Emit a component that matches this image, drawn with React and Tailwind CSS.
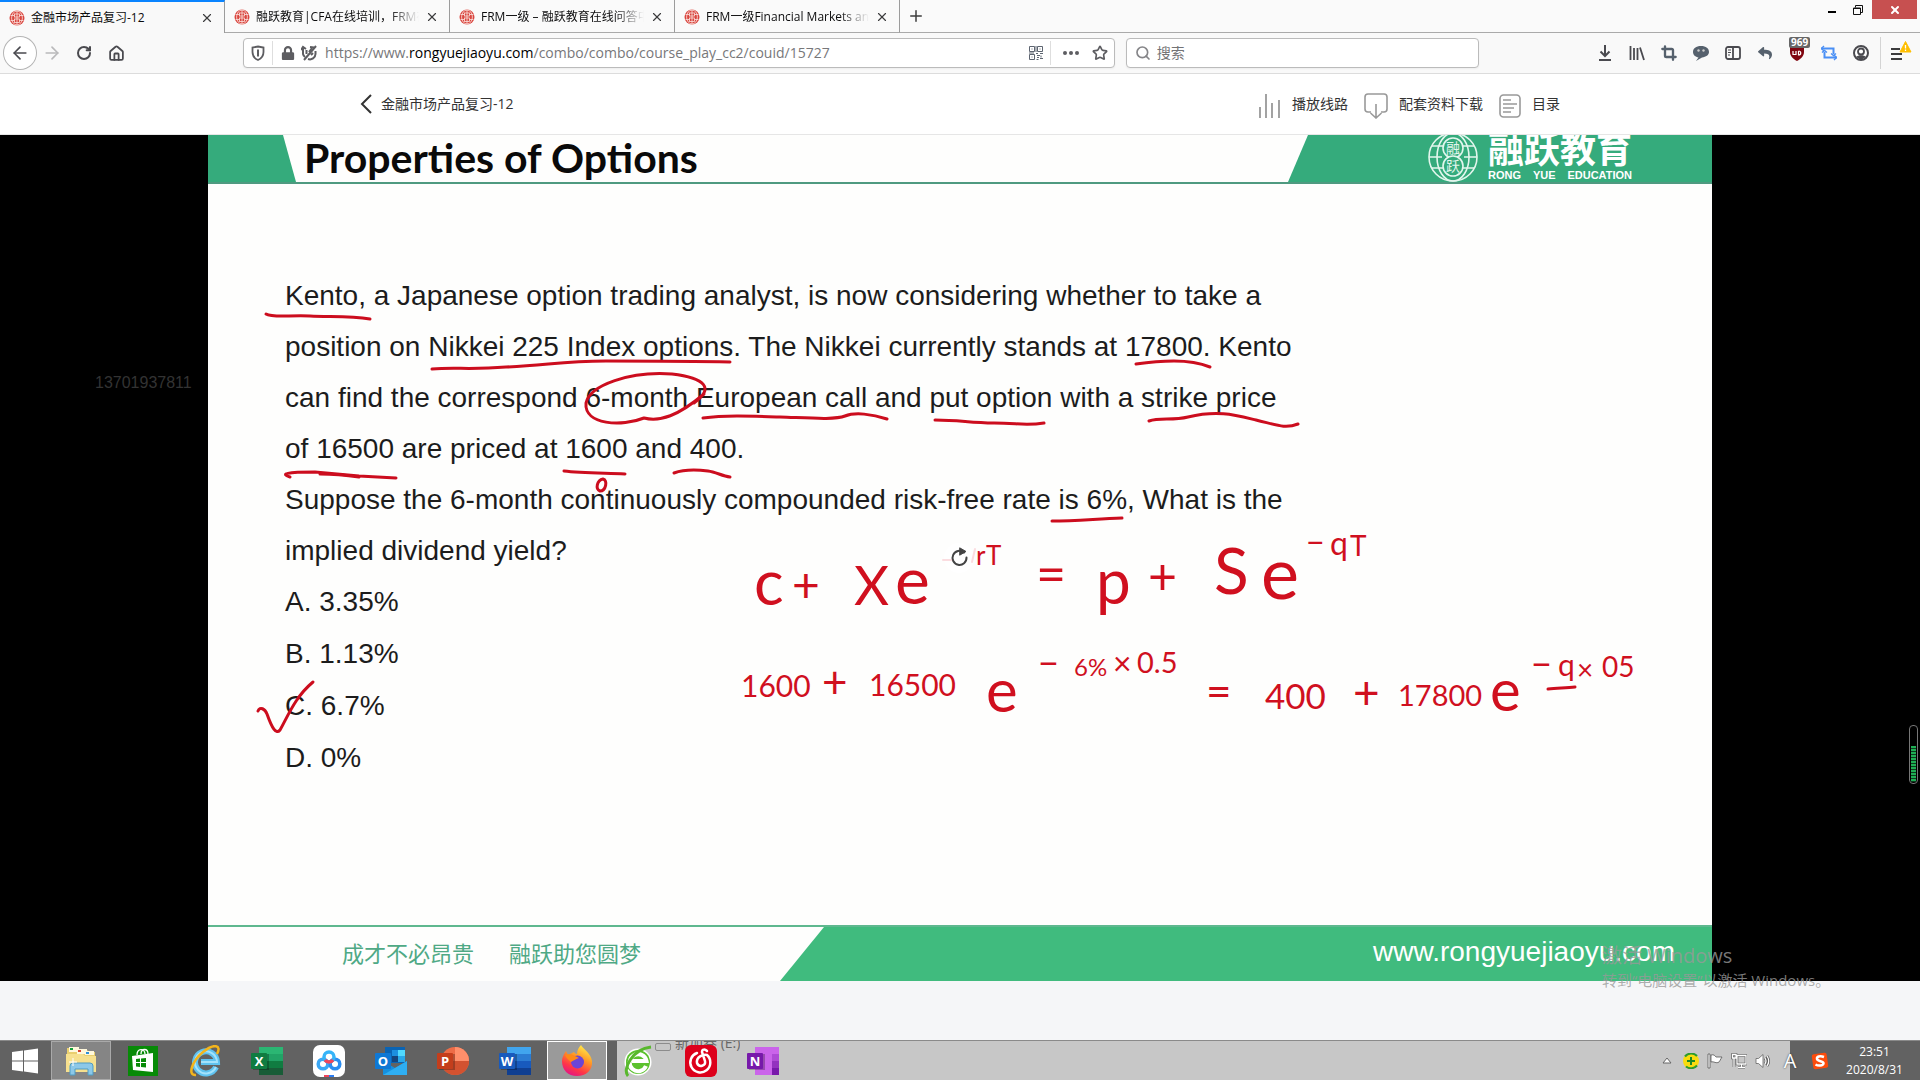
import React from "react";
import {
  ArrowLeft,
  ArrowRight,
  Crop,
  Home,
  Plus,
  RotateCw,
  Search,
  Star,
  X,
} from "lucide-react";
import { FaLock, FaReply } from "react-icons/fa";

const tabs = [
  { title: "金融市场产品复习-12", active: true },
  { title: "融跃教育|CFA在线培训，FRM在线培训" },
  { title: "FRM一级 – 融跃教育在线问答中心" },
  { title: "FRM一级Financial Markets and Products" },
];

const question = [
  "Kento, a Japanese option trading analyst, is now considering whether to take a",
  "position on Nikkei 225 Index options. The Nikkei currently stands at 17800. Kento",
  "can find the correspond 6-month European call and put option with a strike price",
  "of 16500 are priced at 1600 and 400.",
  "Suppose the 6-month continuously compounded risk-free rate is 6%, What is the",
  "implied dividend yield?",
];

const answers = ["A. 3.35%", "B. 1.13%", "C. 6.7%", "D. 0%"];

// Pen strokes: underlines, the ring and the tick
const strokes = [
  "M266 314 C272 318 290 315 310 316 S350 316 370 319",
  "M432 369 C455 367 470 370 506 367 C545 366 560 361 606 361 S690 361 730 362",
  "M694 403 C715 388 705 378 672 374 C630 371 590 385 586 403 C584 425 622 427 644 418 C660 422 678 416 704 394",
  "M703 418 C725 415 750 416 780 417 S835 420 845 416 S872 414 887 419",
  "M935 420 C960 420 970 423 994 423 S1025 426 1044 423",
  "M1149 421 C1160 417 1172 421 1188 417 C1218 410 1235 415 1256 420 S1285 429 1298 424",
  "M1136 364 C1150 362 1160 361 1174 361 S1200 363 1210 367",
  "M290 477 C280 474 286 472 315 472 L359 476 L396 478",
  "M320 474 C335 474 345 475 359 477",
  "M564 471 C580 473 600 473 625 474",
  "M674 473 C685 469 700 470 708 471 S722 476 730 477",
  "M603 479 C597 480 595 489 600 491 C606 491 608 480 603 479 Z",
  "M1052 521 C1075 521 1095 519 1122 518",
  "M258 711 C260 706 265 709 267 714 C272 728 276 735 280 730 C288 716 295 697 313 682",
  "M1548 689 C1558 688 1566 688 1575 687",
];

// Handwritten working: [text, x, baseline, font size]
const working = [
  ["c", 754, 605, 62],
  ["+", 792, 602, 48],
  ["X", 854, 605, 54],
  ["e", 895, 604, 66],
  ["r", 976, 565, 26],
  ["T", 986, 565, 26],
  ["=", 1036, 593, 52],
  ["p", 1096, 604, 62],
  ["+", 1148, 594, 50],
  ["S", 1214, 594, 64],
  ["e", 1261, 599, 72],
  ["−", 1306, 554, 32],
  ["q", 1330, 555, 32],
  ["T", 1350, 556, 28],
  ["1600", 741, 697, 30],
  ["+", 822, 698, 44],
  ["16500", 869, 696, 30],
  ["e", 986, 712, 60],
  ["−", 1038, 676, 36],
  ["6%", 1074, 676, 24],
  ["×", 1113, 675, 32],
  ["0.5", 1137, 673, 29],
  ["=", 1206, 707, 44],
  ["400", 1265, 709, 35],
  ["+", 1353, 709, 46],
  ["17800", 1398, 706, 29],
  ["e", 1490, 711, 58],
  ["−", 1531, 677, 36],
  ["q", 1558, 676, 30],
  ["×", 1577, 680, 28],
  ["05", 1602, 677, 28],
];

function Favicon() {
  return (
    <svg viewBox="0 0 16 16" className="size-4 shrink-0">
      <circle cx="8" cy="8" r="7.5" fill="#d9463f" />
      <g fill="none" stroke="#fbe3df" strokeWidth="0.8">
        <ellipse cx="8" cy="8" rx="5.4" ry="7" />
        <path d="M8 1v14M1.5 5.5h4M10.500 5.500h4M1.500 10.500h4M10.500 10.500h4" />
        <rect x="5.500" y="4" width="5" height="3" />
        <rect x="5.500" y="9" width="5" height="3.500" />
      </g>
    </svg>
  );
}

function TabBar() {
  return (
    <div className="flex h-[33px] bg-[#fafafa]">
      <div role="tablist" className="flex min-w-0 flex-1">
        {tabs.map((tab) => (
          <div
            key={tab.title}
            role="tab"
            aria-selected={!!tab.active}
            className={`flex w-[225px] items-center gap-1.5 border-r border-[#9c9c9c] pl-[9px] pr-2.5 ${
              tab.active
                ? "border-t-2 border-t-[#0a84ff] bg-[#f9f9f9]"
                : "border-b border-b-[#aaaaaa] pt-0.5"
            }`}
          >
            <Favicon />
            <span
              className={`min-w-0 flex-1 overflow-hidden whitespace-nowrap text-xs text-[#0c0c0d] ${
                tab.active ? "" : "[mask-image:linear-gradient(to_right,#000_82%,transparent)]"
              }`}
            >
              {tab.title}
            </span>
            <button aria-label="关闭标签页">
              <X className="size-3.5 text-[#3c3c3d]" />
            </button>
          </div>
        ))}
        <div className="flex flex-1 items-center border-b border-[#aaaaaa] pl-[7px]">
          <button aria-label="打开新标签页">
            <Plus className="size-[18px] text-[#3c3c3d]" />
          </button>
        </div>
      </div>
      <div className="flex items-start border-b border-[#aaaaaa] pr-[3px]">
        <button aria-label="最小化" className="flex h-5 w-6 items-center justify-center">
          <span className="mt-1 h-0.5 w-2 bg-black" />
        </button>
        <button aria-label="还原" className="flex h-5 w-7 items-center justify-center">
          <svg viewBox="0 0 10 10" className="size-2.5" fill="none" stroke="#111">
            <path d="M2.500 2.500V0.500H9.500V7.500H7.500" />
            <path d="M0.500 3H7.500V9.500H0.500Z" />
            <path d="M0.500 3.500H7.500" />
          </svg>
        </button>
        <button
          aria-label="关闭"
          className="flex h-[19px] w-[45px] items-center justify-center bg-[#c75050] text-white"
        >
          <X className="size-3" strokeWidth={4} />
        </button>
      </div>
    </div>
  );
}

function ToolButton({ label, children, className = "" }) {
  return (
    <button
      aria-label={label}
      className={`relative flex size-8 shrink-0 items-center justify-center text-[#4a4a4f] ${className}`}
    >
      {children}
    </button>
  );
}

function Toolbar() {
  return (
    <nav className="flex h-[41px] items-center border-b border-[#dcdcdc] bg-[#f9f9f9] px-1">
      <ToolButton label="后退" className="rounded-full bg-white ring-1 ring-[#b4b4b4]">
        <ArrowLeft className="size-5" />
      </ToolButton>
      <ToolButton label="前进">
        <ArrowRight className="size-5 text-[#b9b9bb]" />
      </ToolButton>
      <ToolButton label="重新载入">
        <RotateCw className="size-4" strokeWidth={3} />
      </ToolButton>
      <ToolButton label="主页">
        <Home className="size-[17px]" strokeWidth={2.500} />
      </ToolButton>

      <div className="flex-[111]" />
      <div className="flex h-[30px] min-w-0 flex-[869] items-center rounded-sm border border-[#bbbbbb] bg-white text-[#5d5d61] shadow-xs">
        <span className="flex h-6 w-[29px] items-center justify-center border-r border-[#dedede]">
          <svg viewBox="0 0 16 16" className="size-4" fill="none" stroke="#5d5d61" strokeWidth="1.800">
            <path d="M8 1.500 L13.500 2.500 V7 C13.500 11 11.500 13.500 8 15 C4.500 13.500 2.500 11 2.500 7 V2.500 Z" />
            <path d="M8 4.500V11.500" strokeWidth="2" />
          </svg>
        </span>
        <FaLock className="ml-2 size-3.5 shrink-0" />
        <svg viewBox="0 0 16 16" className="ml-1.5 size-4 shrink-0" fill="none" stroke="#5d5d61" strokeWidth="2">
          <path d="M2 3 V9 A5 5 0 0 0 4 12 M5.500 5 V9 M14.500 6 V9 A5.500 5.500 0 0 1 7 14 M8 7 L11 3" />
          <path d="M15 1 L3 15" />
          <path d="M0 5L2 2L5 4M9 2L13 2.500M10 10L12 8" />
        </svg>
        <div className="ml-2 min-w-0 flex-1 truncate text-sm text-[#77777a]">
          https://www.<span className="text-black">rongyuejiaoyu.com</span>
          /combo/combo/course_play_cc2/couid/15727
        </div>
        <button aria-label="二维码" className="flex h-6 w-7 items-center justify-center border-r border-[#dedede]">
          <svg viewBox="0 0 14 14" className="size-3.5" fill="none" stroke="#5d6470">
            <path d="M0.500 0.500h5v5h-5zM8.500 0.500h5v5h-5zM0.500 8.500h5v5h-5z" />
            <path d="M2.500 3h1M10.500 3h1M2.500 11h1M7 0v6M7 7.500h2M11 7.500h3M8 9.500h3M12 9.500v2M8 11.500h2M11 12.500h3M7.500 13.500h2M0 7h5" />
          </svg>
        </button>
        <button aria-label="页面操作" className="flex w-[41px] items-center justify-center gap-0.5">
          <span className="size-1 rounded-full bg-[#5d5d61]" />
          <span className="size-1 rounded-full bg-[#5d5d61]" />
          <span className="size-1 rounded-full bg-[#5d5d61]" />
        </button>
        <button aria-label="收藏" className="mr-1.5">
          <Star className="size-4" strokeWidth={2.500} />
        </button>
      </div>
      <label className="ml-[11px] flex h-[30px] min-w-0 flex-[343] items-center gap-1.5 rounded-sm border border-[#bbbbbb] bg-white pl-2 shadow-xs">
        <Search className="size-4 shrink-0 text-[#858588]" strokeWidth={2.500} />
        <input
          aria-label="搜索"
          placeholder="搜索"
          className="min-w-0 flex-1 text-sm outline-none placeholder:text-[#737376]"
        />
      </label>
      <div className="flex-[110]" />

      <ToolButton label="下载">
        <svg viewBox="0 0 16 16" className="size-4" fill="none" stroke="currentColor" strokeWidth="2">
          <path d="M8 0V11M3.500 6.500L8 11L12.500 6.500M2 15H14" />
        </svg>
      </ToolButton>
      <ToolButton label="书库">
        <svg viewBox="0 0 16 16" className="size-4" fill="none" stroke="currentColor" strokeWidth="1.800">
          <path d="M1.500 1V15M5 3V15M8.500 3V15M11 2.500L15 15" />
        </svg>
      </ToolButton>
      <ToolButton label="截图">
        <Crop className="size-4 text-[#56616d]" strokeWidth={3.500} />
      </ToolButton>
      <ToolButton label="会话">
        <svg viewBox="0 0 16 16" className="size-4">
          <path d="M8 1C3 1 0 3.500 0 7c0 3 2.500 5 5.500 5.500L3 16l6-3.500c4-.5 7-2.500 7-5.500 0-3.500-3-6-8-6z" fill="#56616d" />
          <circle cx="5.500" cy="5.500" r="1.200" fill="#ccc" />
          <circle cx="10.500" cy="5.500" r="1.200" fill="#ccc" />
        </svg>
      </ToolButton>
      <ToolButton label="侧栏">
        <svg viewBox="0 0 16 14" className="h-3.5 w-4" fill="none" stroke="currentColor" strokeWidth="1.800">
          <rect x="1" y="1" width="14" height="12" rx="2" />
          <path d="M8 1V13" />
          <path d="M3 4h3M3 6.500h3M3 9h2" strokeWidth="1" />
        </svg>
      </ToolButton>
      <ToolButton label="撤销">
        <FaReply className="size-3.5 text-[#56616d]" />
      </ToolButton>
      <ToolButton label="uBlock">
        <svg viewBox="0 0 16 16" className="size-4">
          <path d="M8 0C10 1.500 12 2 15 2V7c0 4-3 7-7 9-4-2-7-5-7-9V2c3 0 5-.5 7-2z" fill="#800610" />
          <path d="M4 6V9.500H7V6M9.500 6V10C12.500 10 12.500 6 9.500 6" fill="none" stroke="#fff" strokeWidth="1.200" />
        </svg>
        <span className="absolute left-2 top-0 rounded-xs bg-[#666] px-0.5 text-[10px] font-bold leading-[11px] text-white">
          969
        </span>
      </ToolButton>
      <ToolButton label="循环">
        <svg viewBox="0 0 16 16" className="size-4" fill="none" stroke="#4a8ff5" strokeWidth="2">
          <path d="M0 3.500H12.500V9M16 12.500H3.500V7" />
          <path d="M3 1L0.500 3.500L3 6M13 10L15.500 12.500L13 15M1 7.500L3.500 5.500L6 7.500M10 8.500L12.500 10.500L15 8.500" strokeWidth="1.400" />
        </svg>
      </ToolButton>
      <ToolButton label="账户">
        <svg viewBox="0 0 16 16" className="size-4">
          <circle cx="8" cy="8" r="7" fill="#fff" stroke="#4a4a4f" strokeWidth="2" />
          <circle cx="8" cy="6.500" r="3" fill="none" stroke="#4a4a4f" strokeWidth="1.800" />
          <path d="M3 12C5 9.500 11 9.500 13 12L8 15Z" fill="#4a4a4f" />
        </svg>
      </ToolButton>
      <div className="mx-[3px] h-8 w-px bg-[#d4d4d4]" />
      <ToolButton label="菜单">
        <svg viewBox="0 0 24 24" className="size-6">
          <path d="M3 8H12M3 13H14M3 18H14" stroke="#3c3c3d" strokeWidth="2" />
          <path d="M17.500 0.500L23 11H12Z" fill="#ffbf00" stroke="#ffbf00" strokeLinejoin="round" />
          <path d="M17.500 4V7.500M17.500 8.500V10" stroke="#fff" strokeWidth="1.300" />
        </svg>
      </ToolButton>
    </nav>
  );
}

function CourseHeader() {
  return (
    <header className="border-b border-[#e6e6e6] bg-white">
      <div className="mx-auto flex h-15 max-w-[1200px] items-center text-sm text-[#333]">
        <a href="#back" className="flex items-center">
          <svg viewBox="0 0 12 20" className="mr-[9px] h-5 w-3" fill="none" stroke="#333" strokeWidth="2">
            <path d="M11 1L2 10L11 19" />
          </svg>
          金融市场产品复习-12
        </a>
        <div className="ml-auto flex items-center gap-4">
          <button className="flex items-center gap-[11px]">
            <svg viewBox="0 0 22 26" className="mt-1 h-[26px] w-[22px]" stroke="#999" strokeWidth="1.800">
              <path d="M1 14V25M7 1V25M13 10V25M20 7V25" />
            </svg>
            播放线路
          </button>
          <button className="flex items-center gap-[11px]">
            <svg viewBox="0 0 24 26" className="mt-1 h-[26px] w-6" fill="none" stroke="#999" strokeWidth="1.600">
              <path d="M7 19H4a3 3 0 0 1-3-3V4a3 3 0 0 1 3-3H20a3 3 0 0 1 3 3V16a3 3 0 0 1-3 3H17" />
              <path d="M12 11V25M6.500 20L12 25L17.500 20" />
            </svg>
            配套资料下载
          </button>
          <button className="flex items-center gap-[11px]">
            <svg viewBox="0 0 22 24" className="mt-1 h-6 w-[22px]" fill="none" stroke="#999" strokeWidth="1.600">
              <rect x="1" y="1" width="20" height="22" rx="3.500" />
              <path d="M4 6H12M4 10H18M4 14H15M4 18H12" />
            </svg>
            目录
          </button>
        </div>
      </div>
    </header>
  );
}

function SlideLogo() {
  return (
    <div className="flex items-end gap-2.5 text-white">
      <svg viewBox="0 0 50 50" className="size-[50px]" fill="none" stroke="#e2f6ed" strokeWidth="1.600">
        <circle cx="25" cy="25" r="24" />
        <ellipse cx="25" cy="25" rx="16" ry="24" />
        <path d="M1 25H14M36 25H49M4 14H16M34 14H46M4 36H16M34 36H46" />
        <circle cx="25" cy="16" r="10" fill="#35ab7c" />
        <circle cx="25" cy="34" r="10" fill="#35ab7c" />
        <text x="25" y="21" textAnchor="middle" fontSize="14" fill="#e2f6ed" stroke="none">融</text>
        <text x="25" y="39" textAnchor="middle" fontSize="14" fill="#e2f6ed" stroke="none">跃</text>
      </svg>
      <div className="font-bold">
        <div className="text-4xl leading-9">融跃教育</div>
        <div className="flex justify-between font-['Liberation_Sans',Arial,sans-serif] text-[11px] leading-3.5">
          <span>RONG</span>
          <span>YUE</span>
          <span>EDUCATION</span>
        </div>
      </div>
    </div>
  );
}

function Ink() {
  return (
    <svg
      viewBox="208 135 1504 846"
      className="pointer-events-none absolute inset-0 size-full"
      fill="none"
      stroke="#cc0d1e"
      strokeWidth="3"
      strokeLinecap="round"
      strokeLinejoin="round"
    >
      {strokes.map((d) => (
        <path key={d} d={d} />
      ))}
      <g fill="#d0101f" stroke="none" fontFamily="Lato, sans-serif">
        {working.map(([text, x, y, size]) => (
          <text key={`${x}-${y}`} x={x} y={y} fontSize={size}>
            {text}
          </text>
        ))}
      </g>
      {/* replay cursor sitting on top of the exponent */}
      <circle cx="959" cy="558" r="15" fill="#fff" stroke="none" />
      <path d="M943 560H952M972 562L975 549" stroke="#fbdde0" strokeWidth="2" />
      <path d="M964 552.500A7 7 0 1 0 966.500 557.500" stroke="#444" strokeWidth="2" />
      <path d="M960 548L966 551.500L960 555Z" fill="#444" stroke="#444" strokeWidth="1" />
    </svg>
  );
}

function Slide() {
  return (
    <div className="relative mx-auto flex aspect-video w-full max-w-[1504px] flex-col overflow-hidden bg-[#fefefd]">
      <div className="flex h-[49px] items-end border-b-2 border-[#4f9a80]">
        <div className="h-full w-22 bg-[#35ab7c] [clip-path:polygon(0_0,75px_0,100%_100%,0_100%)]" />
        <h1 className="ml-2 whitespace-nowrap font-[Lato] text-[41px] font-bold leading-12 text-[#0a0a0a]">
          Properties of Options
        </h1>
        <div className="ml-auto flex h-full w-[424px] items-end bg-[#35ab7c] pl-[140px] [clip-path:polygon(20px_0,100%_0,100%_100%,0_100%)]">
          <SlideLogo />
        </div>
      </div>

      <div className="flex-1 pl-[77px] pt-[86px] font-['Liberation_Sans',Arial,sans-serif] text-[28px] leading-[51px] text-[#1c1c1c]">
        {question.map((line) => (
          <p key={line} className="whitespace-nowrap">
            {line}
          </p>
        ))}
        <ol className="leading-[52px]">
          {answers.map((answer) => (
            <li key={answer}>{answer}</li>
          ))}
        </ol>
      </div>

      <div className="flex h-14 items-stretch border-t-2 border-[#5fb88f]">
        <div className="flex items-center gap-[35px] pb-0.5 pl-[134px] text-[22px] text-[#4fa985]">
          <span>成才不必昂贵</span>
          <span>融跃助您圆梦</span>
        </div>
        <div className="ml-auto flex w-[932px] items-center justify-end bg-[#40bb7e] pb-1 pr-[37px] font-['Liberation_Sans',Arial,sans-serif] text-[28px] text-white [clip-path:polygon(44px_0,100%_0,100%_100%,0_100%)]">
          www.rongyuejiaoyu.com
        </div>
      </div>
      <Ink />
    </div>
  );
}

function OfficeIcon({ letter, tile, shades, round }) {
  return (
    <svg viewBox="0 0 32 30" className="h-[30px] w-8">
      {round ? (
        <>
          <circle cx="18" cy="15" r="14" fill={shades[0]} />
          <path d="M18 1A14 14 0 0 1 32 15H18Z" fill={shades[1]} />
          <path d="M4 15A14 14 0 0 0 32 15Z" fill={shades[2]} />
        </>
      ) : (
        <>
          <rect x="8" y="1" width="24" height="7" fill={shades[0]} />
          <rect x="8" y="8" width="24" height="7" fill={shades[1]} />
          <rect x="8" y="15" width="24" height="7" fill={shades[2]} />
          <rect x="8" y="22" width="24" height="7" fill={shades[3]} />
        </>
      )}
      <rect x="2" y="8" width="16" height="16" fill="#000" opacity="0.25" />
      <rect x="0" y="7" width="16" height="16" rx="1" fill={tile} />
      <text x="8" y="19.500" textAnchor="middle" fontSize="13" fontWeight="700" fill="#fff">
        {letter}
      </text>
    </svg>
  );
}

const apps = [
  {
    name: "文件资源管理器",
    frame: "border border-[#a9a9a9] bg-[#858585]",
    icon: (
      <svg viewBox="0 0 32 30" className="h-[30px] w-8">
        <path d="M2 2H10L12 4H22L24 6H30V26H2Z" fill="#e9cf6f" />
        <path d="M4 1H14V6H4ZM12 3H22V8H12ZM20 5H29V9H20Z" fill="#fff8dc" />
        <path d="M5 2h3v2h-3z" fill="#13a13b" />
        <path d="M13 4h3v2h-3z" fill="#d8432f" />
        <path d="M21 6h3v2h-3z" fill="#2f8fd8" />
        <path d="M1 8H18L20 10H31V26H1Z" fill="#f6e08e" />
        <path d="M5 29V20Q5 17 8 17H25Q28 17 28 20V29H23V23H10V29Z" fill="#8cc8e8" stroke="#4f9cc4" />
        <path d="M8 12V20M4 16H12" stroke="#fff" />
      </svg>
    ),
  },
  {
    name: "应用商店",
    icon: (
      <svg viewBox="0 0 30 30" className="size-[30px]">
        <rect width="30" height="30" fill="#078a07" />
        <path d="M4 10L25 7V26L5 24Z" fill="#fff" />
        <path d="M9 9C9 2 17 2 17 8M13 8C13 2 20 2 20 8" fill="none" stroke="#fff" strokeWidth="1.300" />
        <path d="M8 13L12 12.500V16H8ZM13 12.400L18 12V16H13ZM8 17H12V21L8 20.500ZM13 17H18V21.500L13 21Z" fill="#078a07" />
      </svg>
    ),
  },
  {
    name: "Internet Explorer",
    icon: (
      <svg viewBox="0 0 32 32" className="size-8" fill="none">
        <path d="M27 22A11 11 0 1 1 28 17H12" stroke="#5fc3f0" strokeWidth="6" />
        <path d="M27 22A11 11 0 1 1 28 17H12" stroke="#a4e2fb" strokeWidth="2" />
        <path d="M7 30C-2 31 3 16 14 7S33 0 28 9" stroke="#f3b51c" strokeWidth="2.500" />
      </svg>
    ),
  },
  {
    name: "Excel",
    icon: <OfficeIcon letter="X" tile="#107c41" shades={["#2bb673", "#21a366", "#107c41", "#185c37"]} />,
  },
  {
    name: "百度网盘",
    icon: (
      <svg viewBox="0 0 32 32" className="size-8" fill="none" strokeWidth="3.500">
        <rect width="32" height="32" rx="7" fill="#fff" />
        <circle cx="10" cy="19" r="4.800" stroke="#3ba7f5" />
        <circle cx="22" cy="19" r="4.800" stroke="#2a8cf0" />
        <circle cx="16" cy="12" r="5" stroke="#36b4f8" />
        <path d="M12 15A5 5 0 0 0 20 15" stroke="#f0455c" />
        <path d="M11 31H16" stroke="#f0455c" strokeWidth="2" />
        <path d="M16 31H21" stroke="#2a7cf0" strokeWidth="2" />
      </svg>
    ),
  },
  {
    name: "Outlook",
    icon: (
      <svg viewBox="0 0 32 30" className="h-[30px] w-8">
        <rect x="10" y="1" width="20" height="16" fill="#0a64b4" />
        <path d="M17 4H23V10H17Z" fill="#1c8fe0" />
        <path d="M23 4H30V10H23Z" fill="#50d9ff" />
        <path d="M17 10H23V16H17Z" fill="#14447d" />
        <path d="M23 10H30V16H23Z" fill="#28a8ea" />
        <path d="M8 15L20 22L32 15V29H8Z" fill="#1490df" />
        <path d="M32 15L8 29H32Z" fill="#2eaef2" />
        <rect x="0" y="7" width="16" height="16" rx="1" fill="#0f78d4" />
        <text x="8" y="19.500" textAnchor="middle" fontSize="13" fontWeight="700" fill="#fff">O</text>
      </svg>
    ),
  },
  {
    name: "PowerPoint",
    icon: <OfficeIcon letter="P" tile="#c43e1c" round shades={["#ed6c47", "#ff8f6b", "#d35230"]} />,
  },
  {
    name: "Word",
    icon: <OfficeIcon letter="W" tile="#185abd" shades={["#41a5ee", "#2b7cd3", "#185abd", "#103f91"]} />,
  },
  {
    name: "Firefox",
    frame: "border border-white bg-[#9a9a9a]",
    icon: (
      <svg viewBox="0 0 32 32" className="size-8">
        <defs>
          <linearGradient id="fox" x1="0.8" y1="0" x2="0.3" y2="1">
            <stop offset="0" stopColor="#fff44f" />
            <stop offset="0.4" stopColor="#ff9a26" />
            <stop offset="0.75" stopColor="#ff3647" />
            <stop offset="1" stopColor="#e31587" />
          </linearGradient>
        </defs>
        <path d="M20 0C22 4 30 8 31 16C32 25 25 31 16 31S1 25 1 16C1 12 3 9 5 6L7 10L13 7C14 9 16 9 16 9C16 5 18 2 20 0Z" fill="url(#fox)" />
        <circle cx="16.500" cy="17" r="6.500" fill="#6b45d6" />
        <path d="M4 10C9 8 14 11 18 13C15 14 13 15 10 17C8 15 5 13 4 10Z" fill="#ff8a16" />
      </svg>
    ),
  },
  {
    name: "360浏览器",
    icon: (
      <svg viewBox="0 0 30 32" className="h-8 w-[30px]" fill="none">
        <circle cx="14" cy="17" r="13.500" fill="#fff" />
        <circle cx="14" cy="17" r="12" fill="#5cc12e" />
        <path d="M22 21A8.500 8.500 0 1 1 22.500 16H8" stroke="#fff" strokeWidth="4" />
        <path d="M4 31C-2 25 8 4 27 2" stroke="#58b82d" strokeWidth="3" />
      </svg>
    ),
  },
  {
    name: "网易云音乐",
    icon: (
      <svg viewBox="0 0 32 32" className="size-8" fill="none" stroke="#fff" strokeWidth="2.500" strokeLinecap="round">
        <rect width="32" height="32" rx="6" fill="#dd001b" stroke="none" />
        <path d="M12 8A10 10 0 1 0 22 10C18 9 11 12 12 18C14 23 21 21 20 16L17 7C17 4 20 4 22 6" />
      </svg>
    ),
  },
  {
    name: "OneNote",
    icon: (
      <svg viewBox="0 0 32 30" className="h-[30px] w-8">
        <rect x="8" y="1" width="24" height="28" fill="#ca64ea" />
        <path d="M25 8H32V15H25Z" fill="#ae4bd5" />
        <path d="M25 15H32V22H25Z" fill="#9332bf" />
        <path d="M25 22H32V29H25Z" fill="#7719aa" />
        <rect x="2" y="8" width="16" height="16" fill="#000" opacity="0.25" />
        <rect x="0" y="7" width="16" height="16" rx="1" fill="#7719aa" />
        <text x="8" y="19.500" textAnchor="middle" fontSize="13" fontWeight="700" fill="#fff">N</text>
      </svg>
    ),
  },
];

function Taskbar() {
  return (
    <footer className="flex h-10 overflow-hidden border-t border-[#8a8a8a] bg-[linear-gradient(to_right,#626262_617px,#c7c7c7_617px)]">
      <button aria-label="开始" className="flex w-[50px] items-center justify-center">
        <svg viewBox="0 0 26 26" className="size-[26px]" fill="#fff">
          <path d="M0 4L11 2.500V12.500H0ZM12 2.400L26 0.500V12.500H12ZM0 13.500H11V23.500L0 22ZM12 13.500H26V25.500L12 23.600Z" />
        </svg>
      </button>
      {/* drive entry showing through the glass behind the pinned apps */}
      <div className="absolute left-[655px] flex h-2.5 items-start gap-1 overflow-hidden text-sm leading-1 text-[#666]">
        <span className="mt-0.5 h-2 w-4 rounded-xs border border-[#8c8c8c]" />
        新加卷 (E:)
      </div>
      {apps.map((app) => (
        <button
          key={app.name}
          aria-label={app.name}
          className={`relative mx-px flex w-15 items-center justify-center ${app.frame ?? ""}`}
        >
          {app.icon}
        </button>
      ))}

      <div className="ml-auto flex items-center">
        <ul className="flex items-center">
          <li className="flex w-6 justify-center">
            <svg viewBox="0 0 10 7" className="h-[7px] w-2.5">
              <path d="M5 1L9 6H1Z" fill="#fff" stroke="#666" />
            </svg>
          </li>
          <li className="flex w-6 justify-center">
            <svg viewBox="0 0 16 16" className="size-4">
              <circle cx="8" cy="8" r="8" fill="#f9dc0f" />
              <path d="M2 3.500A8 8 0 0 1 14 3M14 12.500A8 8 0 0 1 3 13.500" fill="none" stroke="#2c9c2f" strokeWidth="2" />
              <path d="M8 4V12M4 8H12" stroke="#1c8a25" strokeWidth="2" />
            </svg>
          </li>
          <li className="flex w-6 justify-center">
            <svg viewBox="0 0 16 16" className="size-4" fill="#fff" stroke="#555" strokeWidth="0.800">
              <path d="M1 1H3V15H1ZM4 2C7 1 8 3 9 4H15C13 7 13 8 12 9C9 11 7 8 4 9Z" />
            </svg>
          </li>
          <li className="flex w-6 justify-center">
            <svg viewBox="0 0 16 16" className="size-4" fill="none">
              <path d="M6 2.500H15V11H6ZM10.500 11V14M7 14.500H14M1.500 1.500H5V5H1.500ZM3 5V14" stroke="#555" strokeWidth="2.600" />
              <path d="M6 2.500H15V11H6ZM10.500 11V14M7 14.500H14M1.500 1.500H5V5H1.500ZM3 5V14" stroke="#fff" strokeWidth="1.300" />
            </svg>
          </li>
          <li className="flex w-6 justify-center">
            <svg viewBox="0 0 16 16" className="size-4" fill="#fff" stroke="#666" strokeWidth="0.800">
              <path d="M1 5.500H3.500L8 1.500V14.500L3.500 10.500H1Z" />
              <path d="M10 5Q12 8 10 11M12 3Q15.500 8 12 13" fill="none" stroke="#555" strokeWidth="2.600" />
              <path d="M10 5Q12 8 10 11M12 3Q15.500 8 12 13" fill="none" stroke="#fff" strokeWidth="1.300" />
            </svg>
          </li>
        </ul>
        <div className="flex h-10 w-[145px] items-center bg-[linear-gradient(to_right,#c7c7c7_15px,#626262_15px)] text-white">
          <span className="flex w-[30px] justify-center text-xl [text-shadow:0_0_2px_#333]">A</span>
          <svg viewBox="0 0 18 18" className="ml-1.5 size-[18px]">
            <rect x="1.500" y="1.500" width="15" height="15" rx="2" fill="#fb4c0c" transform="rotate(-8 9 9)" />
            <path d="M13 5C9 3.500 5.500 4.500 6 7S13 9 12.500 11.500S7 14 4.500 12.500" fill="none" stroke="#fff" strokeWidth="2.500" />
          </svg>
          <div className="flex flex-1 flex-col items-center text-xs leading-[18px]">
            <span>23:51</span>
            <span>2020/8/31</span>
          </div>
        </div>
      </div>
    </footer>
  );
}

export default function App() {
  return (
    <div className="relative flex min-h-screen flex-col bg-[#f5f6f8] font-['Open_Sans','Noto_Sans_CJK_SC',sans-serif]">
      <TabBar />
      <Toolbar />
      <CourseHeader />
      <main className="relative bg-black">
        <Slide />
        <span className="absolute left-[95px] top-[236px] font-['Liberation_Sans',Arial,sans-serif] text-base text-[#333]">
          13701937811
        </span>
        {/* floating level meter */}
        <div className="absolute right-0.5 top-[590px] flex h-[59px] w-[9px] flex-col justify-end rounded-sm border border-[#777] p-px">
          <div className="h-9 bg-[repeating-linear-gradient(#1fae54_0_2px,#0b3b1d_2px_3px)]" />
        </div>
      </main>
      <div className="flex-1" />
      <Taskbar />
      <div className="pointer-events-none absolute bottom-[90px] right-[94px] w-56 whitespace-nowrap text-[#999]/80">
        <p className="text-xl leading-7">激活 Windows</p>
        <p className="text-[15px] leading-5">转到“电脑设置”以激活 Windows。</p>
      </div>
    </div>
  );
}
